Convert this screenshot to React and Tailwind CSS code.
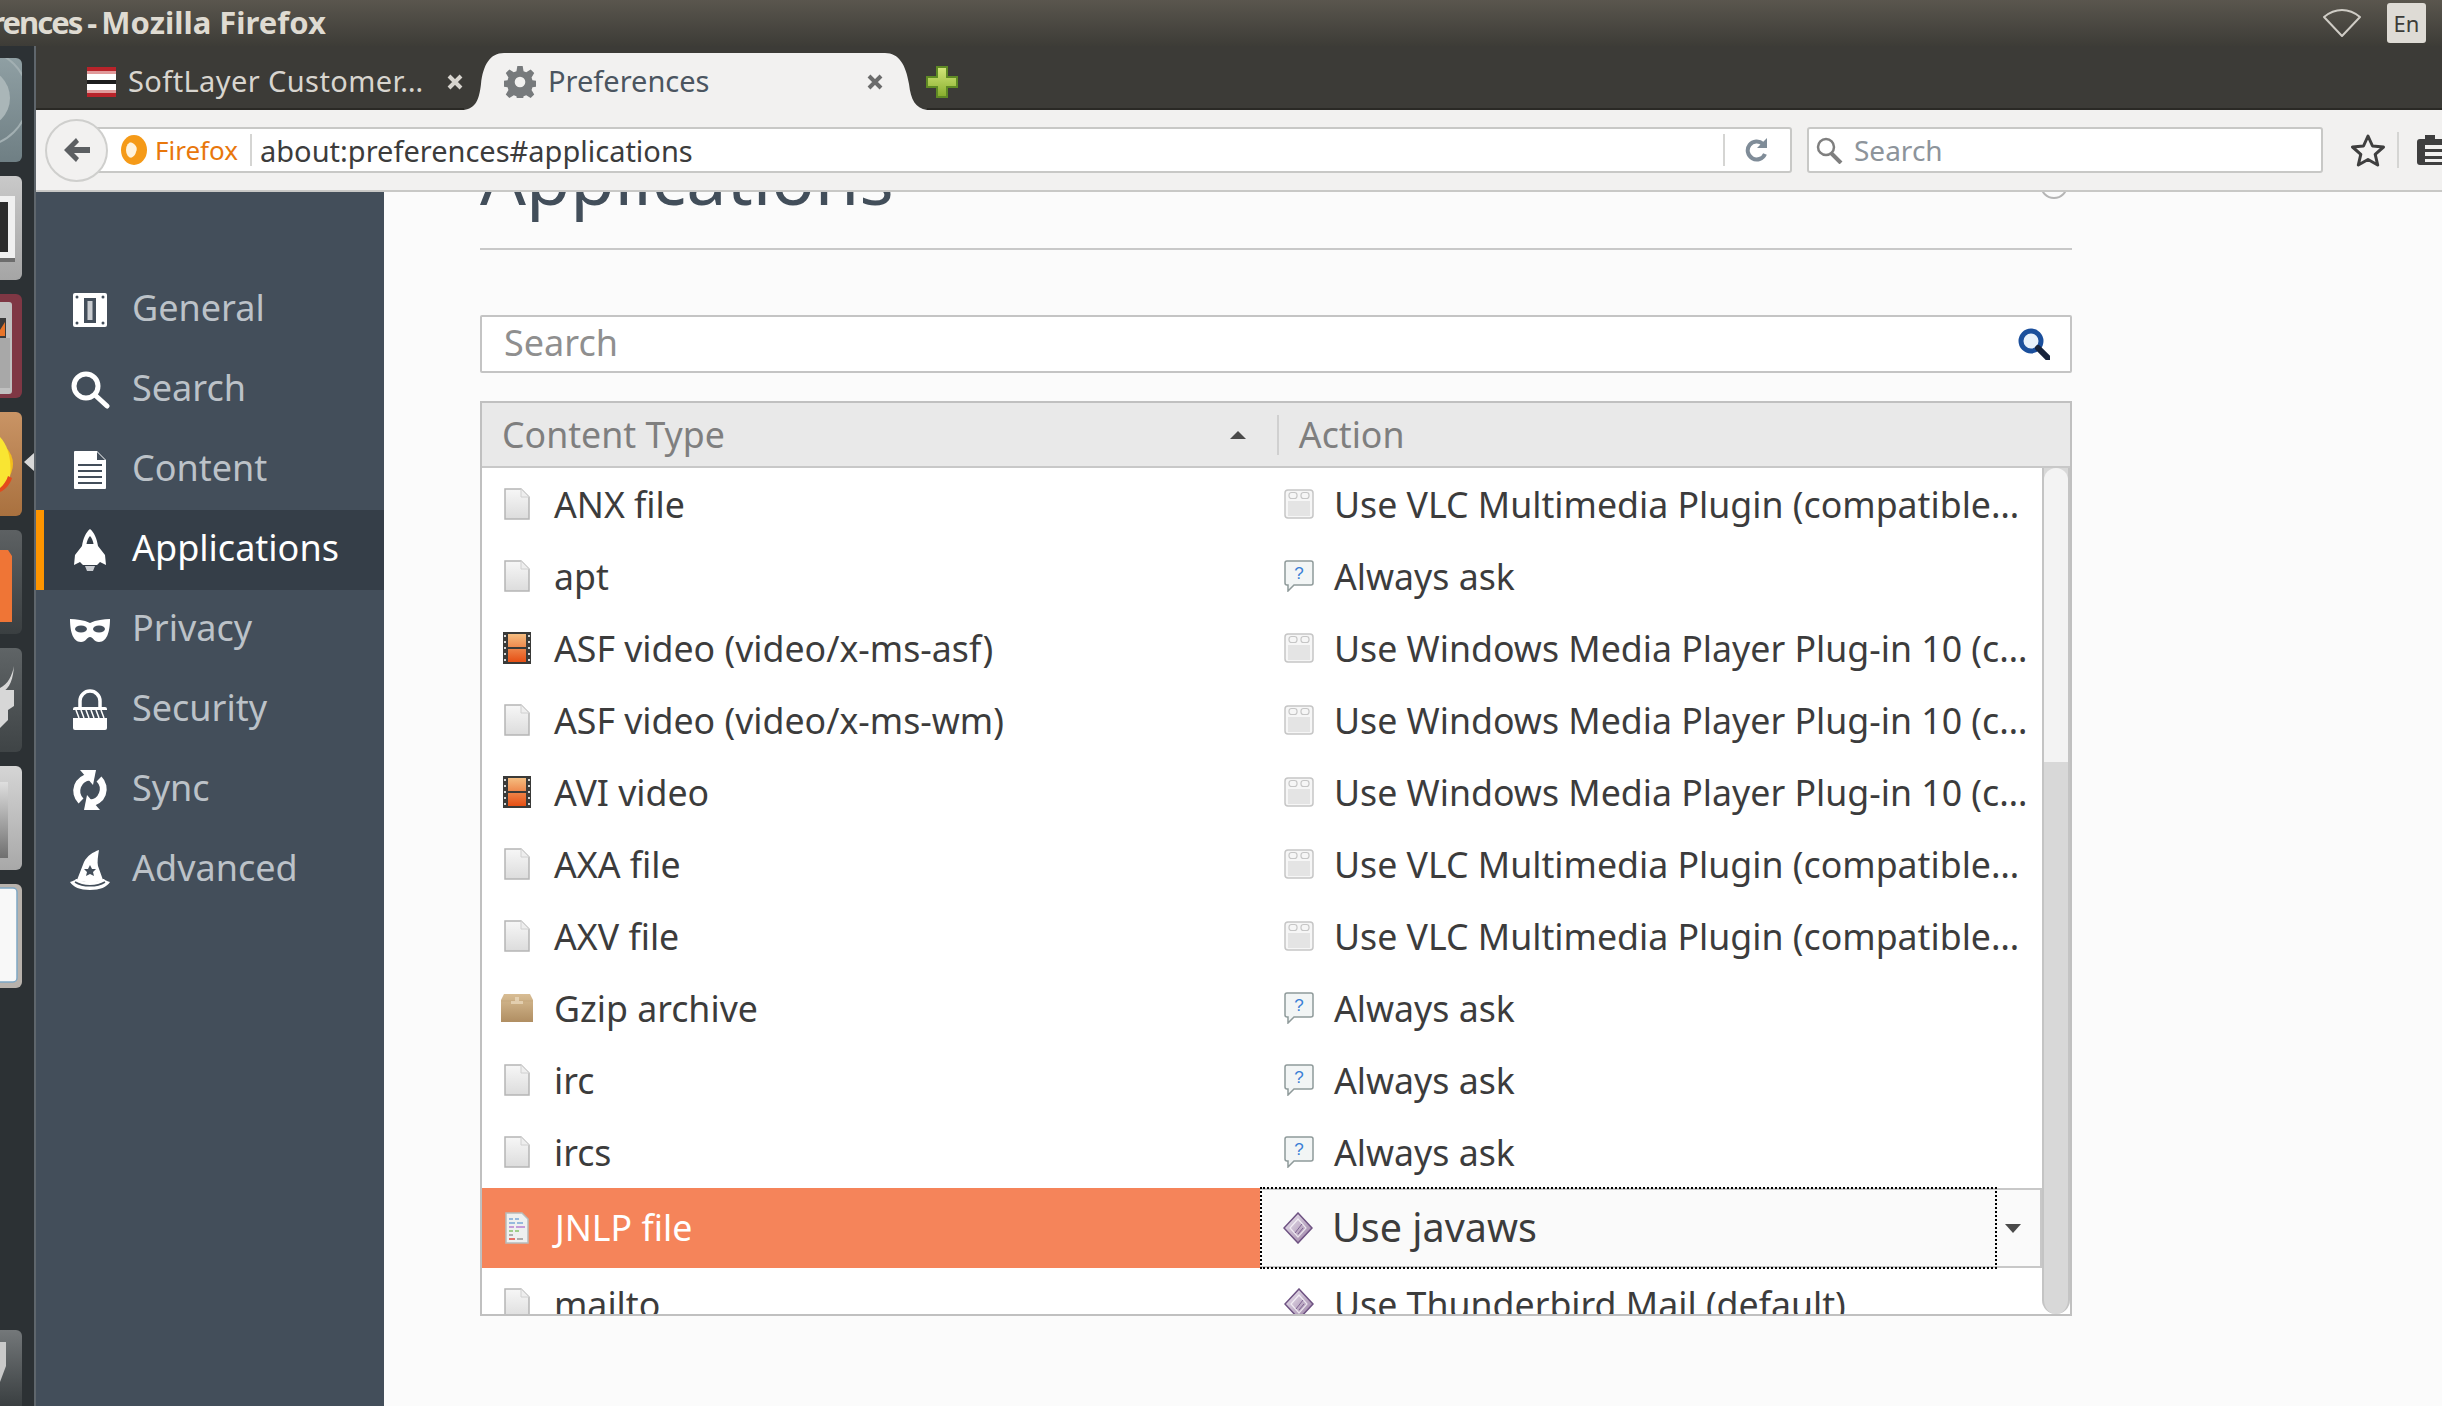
import React from 'react';

const FileIcon = () => (
  <svg width="26" height="32" viewBox="0 0 26 32" className="shrink-0">
    <defs>
      <linearGradient id="fileFill" x1="0" y1="0" x2="0" y2="1">
        <stop offset="0" stopColor="#f7f7f7" />
        <stop offset="1" stopColor="#dcdcdc" />
      </linearGradient>
    </defs>
    <path d="M1 1h16l8 8v22H1z" fill="url(#fileFill)" stroke="#b5b5b5" strokeWidth="1.5" />
    <path d="M17 1v8h8" fill="#eee" stroke="#d0d0d0" strokeWidth="1" />
  </svg>
);

const VideoIcon = () => (
  <svg width="28" height="32" viewBox="0 0 28 32" className="shrink-0">
    <defs>
      <linearGradient id="filmFill" gradientUnits="userSpaceOnUse" x1="0" y1="2" x2="0" y2="30">
        <stop offset="0" stopColor="#f5bd80" />
        <stop offset="1" stopColor="#e64f14" />
      </linearGradient>
    </defs>
    <rect width="28" height="32" fill="#3a3a38" />
    <rect x="5" y="2" width="18" height="13" fill="url(#filmFill)" />
    <rect x="5" y="17" width="18" height="13" fill="url(#filmFill)" />
    {[3, 9, 15, 21, 27].map((y) => (
      <g key={y} fill="#d8d8d8">
        <rect x="1" y={y} width="2" height="2" />
        <rect x="25" y={y} width="2" height="2" />
      </g>
    ))}
  </svg>
);

const BoxIcon = () => (
  <svg width="32" height="28" viewBox="0 0 32 28" className="shrink-0">
    <defs>
      <linearGradient id="boxFill" x1="0" y1="0" x2="0" y2="1">
        <stop offset="0" stopColor="#d8bd94" />
        <stop offset="1" stopColor="#b08e62" />
      </linearGradient>
    </defs>
    <path d="M3 0h26l3 6v22H0V6z" fill="url(#boxFill)" />
    <path d="M0 7h32" stroke="#c5a77c" strokeWidth="1" />
    <path d="M14 3h4v4h4v3H10V7h4z" fill="#ecdcc0" opacity="0.7" />
  </svg>
);

const TextDocIcon = () => (
  <svg width="24" height="32" viewBox="0 0 24 32" className="shrink-0">
    <path d="M1 1h16l6 6v24H1z" fill="#eef0f0" stroke="#b7bcbc" strokeWidth="1.5" />
    <path d="M4 7h4M10 7h4M4 11h6M12 11h6" stroke="#7aa6d6" strokeWidth="1.5" />
    <path d="M4 15h5M11 15h9" stroke="#b77fd1" strokeWidth="1.5" />
    <path d="M4 19h4M10 19h4" stroke="#86c26a" strokeWidth="1.5" />
    <path d="M4 23h4" stroke="#999" strokeWidth="1.5" />
    <path d="M4 27h6" stroke="#e2483d" strokeWidth="1.5" />
    <path d="M12 27h6" stroke="#999" strokeWidth="1.5" />
  </svg>
);

const PluginIcon = () => (
  <svg width="30" height="30" viewBox="0 0 30 30" className="shrink-0">
    <rect x="1" y="1" width="28" height="28" rx="3" fill="#f6f6f6" stroke="#c6c6c6" strokeWidth="1.5" />
    <rect x="4" y="12" width="22" height="15" fill="#e4e4e4" />
    <rect x="5" y="3.500" width="8" height="6" rx="2.500" fill="none" stroke="#c6c6c6" strokeWidth="1.2" />
    <rect x="17" y="3.500" width="8" height="6" rx="2.500" fill="none" stroke="#c6c6c6" strokeWidth="1.2" />
  </svg>
);

const AskIcon = () => (
  <svg width="30" height="32" viewBox="0 0 30 32" className="shrink-0">
    <path d="M3 1h24a2 2 0 0 1 2 2v20a2 2 0 0 1-2 2H10l-6 6v-6H3a2 2 0 0 1-2-2V3a2 2 0 0 1 2-2z" fill="#f2f5f5" stroke="#8f9a9a" strokeWidth="1.5" />
    <text x="15" y="19" textAnchor="middle" fontSize="17" fontFamily="Liberation Sans" fill="#3b7fd6">?</text>
  </svg>
);

const DiamondIcon = () => (
  <svg width="30" height="32" viewBox="0 0 30 32" className="shrink-0">
    <defs>
      <linearGradient id="diamondFill" x1="0" y1="0" x2="1" y2="1">
        <stop offset="0" stopColor="#f3eef6" />
        <stop offset="1" stopColor="#94789f" />
      </linearGradient>
    </defs>
    <path d="M15 1l14 15-14 15L1 16z" fill="url(#diamondFill)" stroke="#6e5282" strokeWidth="1.5" />
    <path d="M15 7l8 9-8 9-8-9z" fill="none" stroke="#ffffff" strokeWidth="1.2" opacity="0.7" />
    <path d="M12 21l7-9M15 22l5-6" stroke="#7d6390" strokeWidth="1" />
  </svg>
);

// sidebar icons, all white on 40x40
const GeneralIcon = () => (
  <svg width="40" height="40" viewBox="0 0 40 40">
    <rect x="3" y="3" width="34" height="34" rx="2" fill="#fff" />
    <rect x="14" y="8" width="12" height="25" fill="#434e5a" />
    <rect x="17.5" y="11" width="5" height="19" fill="#c9ccd0" />
    <g fill="#434e5a">
      <circle cx="7" cy="7" r="1.5" />
      <circle cx="33" cy="7" r="1.5" />
      <circle cx="7" cy="33" r="1.5" />
      <circle cx="33" cy="33" r="1.5" />
    </g>
  </svg>
);

const SearchIcon = () => (
  <svg width="40" height="40" viewBox="0 0 40 40" fill="none" stroke="#fff">
    <circle cx="16" cy="16" r="12" strokeWidth="5" />
    <path d="M25 25l12 11" strokeWidth="5" strokeLinecap="round" />
  </svg>
);

const ContentIcon = () => (
  <svg width="40" height="40" viewBox="0 0 40 40">
    <path d="M5 1h22l9 9v28a1 1 0 0 1-1 1H5a1 1 0 0 1-1-1V2a1 1 0 0 1 1-1z" fill="#fff" />
    <path d="M27 2v8h8" fill="#434e5a" />
    <path d="M8 15h24M8 21h24M8 27h24M8 33h24" stroke="#434e5a" strokeWidth="2" />
  </svg>
);

const RocketIcon = () => (
  <svg width="40" height="44" viewBox="0 0 40 44">
    <path d="M20 1c4 3 7 10 8 17l7 9 1 10-6-3-3 3H13l-3-3-6 3 1-10 7-9c1-7 4-14 8-17z" fill="#fff" />
    <path d="M20 8c2 2 3 5 3.500 8h-7c0.500-3 1.500-6 3.500-8z" fill="#353e48" />
    <path d="M15 38h10l-2 5h-6z" fill="#c8cbd0" />
  </svg>
);

const MaskIcon = () => (
  <svg width="40" height="26" viewBox="0 0 40 26">
    <path d="M0 2c6 0 14 1 20 4 6-3 14-4 20-4 0 10-2 23-11 23-5 0-6-5-9-5s-4 5-9 5C2 25 0 12 0 2z" fill="#fff" />
    <ellipse cx="11" cy="12" rx="6" ry="3.500" fill="#434e5a" />
    <ellipse cx="29" cy="12" rx="6" ry="3.500" fill="#434e5a" />
  </svg>
);

const LockIcon = () => (
  <svg width="40" height="42" viewBox="0 0 40 42">
    <path d="M10 18v-6a10 10 0 0 1 20 0v6" fill="none" stroke="#fff" strokeWidth="3.500" />
    <rect x="3" y="18" width="34" height="23" rx="2" fill="#fff" />
    <rect x="3" y="21" width="34" height="8" fill="#434e5a" />
    <path d="M6 21l3 8M11 21l3 8M16 21l3 8M21 21l3 8M26 21l3 8M31 21l3 8" stroke="#fff" strokeWidth="1.500" />
  </svg>
);

const SyncIcon = () => (
  <svg width="40" height="42" viewBox="0 0 40 42" fill="none">
    <path d="M20 8A14 14 0 0 0 11 32" stroke="#fff" strokeWidth="7" />
    <path d="M20 34A14 14 0 0 0 29 10" stroke="#fff" strokeWidth="7" />
    <path d="M10 1h16l-3 15z" fill="#fff" />
    <path d="M30 41H14l3-15z" fill="#fff" />
  </svg>
);

const HatIcon = () => (
  <svg width="42" height="42" viewBox="0 0 42 42">
    <path d="M30 1c-6 2-12 6-15 12L8 31c4 3 22 3 26 0l-5-14c-1-4 0-10 1-16z" fill="#fff" />
    <path d="M21 16l2 4 4 0-3 3 1 4-4-2-4 2 1-4-3-3 4 0z" fill="#434e5a" />
    <path d="M1 33c5-1 5-3 7-3 4 4 22 4 26 0 2 0 2 2 7 3-3 5-10 8-20 8S4 38 1 33z" fill="#fff" />
    <path d="M6 33c8 5 22 5 30 0" fill="none" stroke="#434e5a" strokeWidth="1.500" />
  </svg>
);

const sidebarItems = [
  { label: 'General', icon: <GeneralIcon /> },
  { label: 'Search', icon: <SearchIcon /> },
  { label: 'Content', icon: <ContentIcon /> },
  { label: 'Applications', icon: <RocketIcon />, active: true },
  { label: 'Privacy', icon: <MaskIcon /> },
  { label: 'Security', icon: <LockIcon /> },
  { label: 'Sync', icon: <SyncIcon /> },
  { label: 'Advanced', icon: <HatIcon /> },
];

const vlc = 'Use VLC Multimedia Plugin (compatible…';
const wmp = 'Use Windows Media Player Plug-in 10 (c…';

const rows = [
  { icon: <FileIcon />, name: 'ANX file', actionIcon: <PluginIcon />, action: vlc },
  { icon: <FileIcon />, name: 'apt', actionIcon: <AskIcon />, action: 'Always ask' },
  { icon: <VideoIcon />, name: 'ASF video (video/x-ms-asf)', actionIcon: <PluginIcon />, action: wmp },
  { icon: <FileIcon />, name: 'ASF video (video/x-ms-wm)', actionIcon: <PluginIcon />, action: wmp },
  { icon: <VideoIcon />, name: 'AVI video', actionIcon: <PluginIcon />, action: wmp },
  { icon: <FileIcon />, name: 'AXA file', actionIcon: <PluginIcon />, action: vlc },
  { icon: <FileIcon />, name: 'AXV file', actionIcon: <PluginIcon />, action: vlc },
  { icon: <BoxIcon />, name: 'Gzip archive', actionIcon: <AskIcon />, action: 'Always ask' },
  { icon: <FileIcon />, name: 'irc', actionIcon: <AskIcon />, action: 'Always ask' },
  { icon: <FileIcon />, name: 'ircs', actionIcon: <AskIcon />, action: 'Always ask' },
];

const Row = ({ icon, name, actionIcon, action }) => (
  <div className="flex h-[72px] shrink-0 items-center text-[#3c3c3c]">
    <div className="flex h-full w-[778px] shrink-0 items-center">
      <div className="ml-[21px] flex w-[28px] shrink-0 justify-center">{icon}</div>
      <span className="ml-[23px] mt-[2px] whitespace-nowrap">{name}</span>
    </div>
    <div className="flex w-[782px] shrink-0 items-center">
      <div className="ml-[24px] flex w-[30px] shrink-0 justify-center">{actionIcon}</div>
      <span className="ml-[20px] mt-[2px] whitespace-nowrap">{action}</span>
    </div>
  </div>
);

const LauncherTiles = () => (
  <>
    <div className="h-[104px] w-[22px] shrink-0 overflow-hidden rounded-r-md bg-gradient-to-b from-[#8f9fa3] to-[#6f7f84]">
      <svg width="22" height="104"><circle cx="-20" cy="40" r="30" fill="#aab6b8" /><circle cx="-20" cy="40" r="48" fill="none" stroke="#a2afb2" strokeWidth="2" /></svg>
    </div>
    <div className="h-[104px] w-[22px] shrink-0 overflow-hidden rounded-r-md bg-gradient-to-b from-[#c9c9c9] to-[#a5a5a5]">
      <svg width="22" height="104"><rect x="-10" y="20" width="25" height="62" fill="#f0f0f0" /><rect x="-10" y="26" width="18" height="50" fill="#2b2b2b" /><rect x="-10" y="82" width="25" height="4" fill="#6d6d6d" /></svg>
    </div>
    <div className="h-[104px] w-[22px] shrink-0 overflow-hidden rounded-r-md bg-[#7f3744]">
      <svg width="22" height="104"><rect x="-6" y="8" width="18" height="92" rx="3" fill="#c0c0c0" /><rect x="-6" y="24" width="12" height="20" fill="#3a3a3a" /><path d="M0 36l5-8v14H0z" fill="#e8752a" /><rect x="-6" y="44" width="16" height="50" fill="#a8a8a8" /></svg>
    </div>
    <div className="h-[104px] w-[22px] shrink-0 overflow-hidden rounded-r-md bg-gradient-to-b from-[#c99465] to-[#a9713f]">
      <svg width="22" height="104"><circle cx="-10" cy="52" r="23" fill="#f3bd1c" /><path d="M0 25c8 8 12 24 10 40-3 8-8 13-12 14z" fill="#f9e532" /><path d="M-4 78c6-2 10-8 12-14l4 2c-2 7-8 14-16 15z" fill="#e34a1c" /></svg>
    </div>
    <div className="h-[104px] w-[22px] shrink-0 overflow-hidden rounded-r-md bg-gradient-to-b from-[#5d6163] to-[#3a3f41]">
      <svg width="22" height="104"><path d="M0 20h8l4 6v66H0z" fill="#ef7536" /></svg>
    </div>
    <div className="h-[104px] w-[22px] shrink-0 overflow-hidden rounded-r-md bg-gradient-to-b from-[#5f6466] to-[#3f4446]">
      <svg width="22" height="104"><path d="M0 40c8-4 12-12 14-22-1 12-3 22-14 28zM0 42h14v16l-6 4v10l-8 8z" fill="#d7d7d7" /></svg>
    </div>
    <div className="h-[104px] w-[22px] shrink-0 overflow-hidden rounded-r-md bg-gradient-to-b from-[#d5d5d5] to-[#a8a8a8]">
      <svg width="22" height="104"><defs><linearGradient id="silverDoc" x1="0" y1="0" x2="0" y2="1"><stop offset="0" stopColor="#dedede" /><stop offset="1" stopColor="#6f6f6f" /></linearGradient></defs><rect x="-6" y="16" width="14" height="76" fill="url(#silverDoc)" /></svg>
    </div>
    <div className="h-[104px] w-[22px] shrink-0 overflow-hidden rounded-r-md bg-[#b8b2ac]">
      <svg width="22" height="104"><rect x="-10" y="4" width="27" height="94" rx="4" fill="#f8f8f8" stroke="#7ea7c4" strokeWidth="1.500" /></svg>
    </div>
  </>
);

const App = () => {
  return (
    <div className="flex h-[1406px] w-[2442px] flex-col overflow-hidden bg-[#fbfbfb] font-['Noto_Sans',sans-serif]">
      {/* title bar */}
      <div className="flex h-[46px] shrink-0 items-center justify-between bg-gradient-to-b from-[#5a564e] to-[#3d3c37] pr-[16px]">
        <div className="mb-[3px] w-[326px] overflow-hidden">
          <div className="flex justify-end whitespace-pre text-[31px] font-bold leading-[40px] text-[#dfdbd2]">
            <span className="tracking-[-2px]">Preferences - </span>
            <span>Mozilla Firefox</span>
          </div>
        </div>
        <div className="flex items-center gap-[25px]">
          <svg width="40" height="30" viewBox="0 0 40 30" fill="none">
            <path d="M2 9C8 4 14 2 20 2s12 2 18 7L20 28z" stroke="#cfccc5" strokeWidth="2" strokeLinejoin="round" />
          </svg>
          <div className="flex h-[40px] w-[39px] items-center justify-center rounded-[3px] bg-[#dedbd5] text-[22px] text-[#3c3b37]">En</div>
        </div>
      </div>

      <div className="flex min-h-0 flex-1">
        {/* launcher */}
        <div className="relative flex w-[36px] shrink-0 flex-col gap-[14px] border-r-2 border-[#5f666c] bg-[#2c3134] pt-[12px]">
          <LauncherTiles />
          <div className="mt-auto h-[76px] w-[22px] shrink-0 overflow-hidden rounded-tr-md bg-gradient-to-b from-[#74787a] to-[#3a3f41]">
            <svg width="22" height="76"><path d="M0 12h6v24l-6 16z" fill="#c9c9c9" /></svg>
          </div>
          <svg className="absolute left-[24px] top-[407px]" width="10" height="18" viewBox="0 0 10 18">
            <path d="M10 0v18L0 9z" fill="#d8d8d8" />
          </svg>
        </div>

        <div className="flex min-w-0 flex-1 flex-col">
          {/* tab strip */}
          <div className="flex h-[64px] shrink-0 bg-[#3c3b37]">
            <div className="flex w-[428px] items-center border-b-2 border-[#2a2925] pl-[51px] pt-[10px]">
              <svg width="29" height="30" viewBox="0 0 29 30" className="shrink-0">
                <rect width="29" height="4" fill="#b8232a" />
                <rect y="4" width="29" height="3" fill="#e09a9a" />
                <rect y="7" width="29" height="6" fill="#fff" />
                <rect y="13" width="29" height="4" fill="#1c1c1c" />
                <rect y="17" width="29" height="6" fill="#fff" />
                <rect y="23" width="29" height="3" fill="#e09a9a" />
                <rect y="26" width="29" height="4" fill="#b8232a" />
              </svg>
              <span className="mb-[2px] ml-[12px] whitespace-nowrap text-[29px] tracking-[0.4px] text-[#d8d5cf]">SoftLayer Customer…</span>
              <svg width="18" height="18" viewBox="0 0 18 18" className="ml-[22px] shrink-0">
                <path d="M3 3l12 12M15 3L3 15" stroke="#d8d5cf" strokeWidth="4" />
              </svg>
            </div>
            <div className="flex shrink-0 items-end">
              <svg width="40" height="57" viewBox="0 0 40 57" className="shrink-0">
                <path d="M0 57c12-2 15-10 17-26C19 12 26 0 40 0v57z" fill="#f2f1f0" />
              </svg>
              <div className="flex h-[57px] w-[381px] items-center bg-[#f2f1f0]">
                <svg width="32" height="32" viewBox="-2 -2 36 36" className="shrink-0">
                  <path d="M13 -2h6l1 6 3 1 5-3 4 4-3 5 1 3 6 1v6l-6 1-1 3 3 5-4 4-5-3-3 1-1 6h-6l-1-6-3-1-5 3-4-4 3-5-1-3-6-1v-6l6-1 1-3-3-5 4-4 5 3 3-1z" fill="#777a7c" />
                  <circle cx="16" cy="16" r="6" fill="#f2f1f0" />
                </svg>
                <span className="mb-[2px] ml-[12px] whitespace-nowrap text-[29px] text-[#4b5560]">Preferences</span>
                <svg width="16" height="16" viewBox="0 0 16 16" className="ml-auto mr-[2px] shrink-0">
                  <path d="M2 2l12 12M14 2L2 14" stroke="#6b6b6b" strokeWidth="4" />
                </svg>
              </div>
              <svg width="42" height="57" viewBox="0 0 42 57" className="shrink-0">
                <path d="M0 0c14 0 21 12 24 31 2 16 6 24 18 26H0z" fill="#f2f1f0" />
              </svg>
            </div>
            <div className="flex flex-1 items-start border-b-2 border-[#2a2925] pt-[20px]">
              <svg width="32" height="32" viewBox="0 0 32 32" className="-ml-[1px]">
                <defs>
                  <linearGradient id="plusFill" x1="0" y1="0" x2="0" y2="1">
                    <stop offset="0" stopColor="#d4e67a" />
                    <stop offset="1" stopColor="#86ad2c" />
                  </linearGradient>
                </defs>
                <path d="M11 1h10v10h10v10H21v10H11V21H1V11h10z" fill="url(#plusFill)" stroke="#5f8a24" strokeWidth="2" />
              </svg>
            </div>
          </div>

          {/* nav bar */}
          <div className="flex h-[82px] shrink-0 items-center border-b-2 border-[#c8c8c6] bg-[#f2f1f0] pl-[9px]">
            <div className="relative z-10 flex h-[63px] w-[63px] shrink-0 items-center justify-center rounded-full border-2 border-[#cfcfcd] bg-[#f2f1f0]">
              <svg width="30" height="30" viewBox="0 0 30 30">
                <path d="M14 3L2 15l12 12 3-4-5-5h16v-6H12l5-5z" fill="#5c5f62" />
              </svg>
            </div>
            <div className="-ml-[32px] flex h-[46px] w-[1716px] shrink-0 items-center rounded-[3px] border-2 border-[#c8c8c6] bg-white pl-[42px]">
              <svg width="28" height="32" viewBox="0 0 28 32" className="shrink-0">
                <ellipse cx="14" cy="16" rx="13" ry="15" fill="#f59a18" />
                <ellipse cx="12" cy="16" rx="6" ry="8" fill="#fff3dd" />
                <path d="M10 8c6 2 8 6 6 10-1 4-4 6-7 6 6 2 12-2 12-9 0-4-5-8-11-7z" fill="#f59a18" />
              </svg>
              <span className="ml-[7px] whitespace-nowrap text-[26px] text-[#e8770c]">Firefox</span>
              <div className="ml-[12px] h-[32px] w-[2px] bg-[#d5d5d3]" />
              <span className="ml-[8px] mt-[1px] whitespace-nowrap text-[29px] text-[#3c3c3c]">about:preferences#applications</span>
              <div className="ml-auto h-[32px] w-[2px] bg-[#d5d5d3]" />
              <svg width="24" height="26" viewBox="0 0 24 26" className="ml-[20px] mr-[21px] shrink-0" fill="none">
                <path d="M18 7a9 9 0 1 0 2 10" stroke="#7f8c98" strokeWidth="4" />
                <path d="M22 1v10H12z" fill="#7f8c98" />
              </svg>
            </div>
            <div className="ml-[15px] flex h-[46px] w-[516px] shrink-0 items-center rounded-[3px] border-2 border-[#c8c8c6] bg-white pl-[6px]">
              <svg width="28" height="28" viewBox="0 0 28 28" fill="none" stroke="#7f7f7f" className="shrink-0">
                <circle cx="11" cy="11" r="8" strokeWidth="2.500" />
                <path d="M16 17l10 10" strokeWidth="4" />
              </svg>
              <span className="ml-[11px] text-[28px] text-[#8d949b]">Search</span>
            </div>
            <svg width="36" height="34" viewBox="0 0 36 34" className="ml-[27px] shrink-0" fill="none">
              <path d="M18 3l4.500 10 11 1-8.300 7.300 2.500 10.700L18 26.500 8.300 32l2.500-10.700L2.500 14l11-1z" stroke="#3f3f3f" strokeWidth="3" strokeLinejoin="round" />
            </svg>
            <div className="ml-[11px] h-[36px] w-[2px] bg-[#d5d5d3]" />
            <svg width="26" height="32" viewBox="0 0 26 32" className="ml-[17px] shrink-0">
              <rect x="1" y="5" width="27" height="26" rx="3" fill="#3f3f3f" />
              <rect x="9" y="1" width="10" height="6" fill="#3f3f3f" />
              <path d="M9 11h20v4H9zM9 18h20v4H9zM9 25h20v3H9z" fill="#f2f1f0" />
            </svg>
          </div>

          <div className="flex min-h-0 flex-1 overflow-hidden">
            {/* sidebar */}
            <nav className="flex w-[348px] shrink-0 flex-col bg-[#434e5a] pt-[78px]">
              {sidebarItems.map((item) => (
                <div
                  key={item.label}
                  className={
                    item.active
                      ? 'flex h-[80px] items-center border-l-8 border-[#ff9500] bg-[#353e48] pl-[25px] text-white'
                      : 'flex h-[80px] items-center pl-[33px] text-[#bcc2c8]'
                  }
                >
                  <div className="flex w-[42px] justify-center">{item.icon}</div>
                  <span className="mb-[5px] ml-[21px] text-[36px]">{item.label}</span>
                </div>
              ))}
            </nav>

            {/* preferences pane */}
            <main className="ml-[96px] flex w-[1592px] shrink-0 flex-col">
              <div className="-mt-[50px] flex h-[108px] shrink-0 justify-between border-b-2 border-[#c8c8c8]">
                <h1 className="text-[72px] leading-[70px] text-[#424e5a]">Applications</h1>
                <div className="mr-[4px] mt-[29px] h-[28px] w-[28px] rounded-full border-2 border-[#b5b5b5]" />
              </div>

              <div className="mt-[65px] flex h-[58px] shrink-0 items-center rounded-[2px] border-2 border-[#c4c4c4] bg-white pl-[22px] pr-[20px]">
                <span className="mb-[2px] text-[36px] text-[#8f8f8f]">Search</span>
                <svg width="32" height="32" viewBox="0 0 32 32" className="ml-auto" fill="none">
                  <circle cx="13" cy="13" r="10" fill="#e8f1fb" stroke="#1b4f9c" strokeWidth="5" />
                  <path d="M20 20l10 10" stroke="#17233a" strokeWidth="6" strokeLinecap="round" />
                </svg>
              </div>

              <div className="mt-[28px] flex h-[915px] shrink-0 flex-col overflow-hidden border-2 border-[#c0c0c0] bg-white text-[35.7px]">
                <div className="flex h-[65px] shrink-0 items-center border-b-2 border-[#c8c8c8] bg-[#e9e9e9] text-[#7f7f7f]">
                  <span className="ml-[20px]">Content Type</span>
                  <svg width="16" height="8" viewBox="0 0 16 8" className="ml-[505px]">
                    <path d="M8 0l8 8H0z" fill="#4a4a4a" />
                  </svg>
                  <div className="ml-[31px] h-[40px] w-[2px] bg-[#d0d0d0]" />
                  <span className="ml-[20px]">Action</span>
                </div>
                <div className="flex min-h-0 flex-1">
                  <div className="flex w-[1560px] shrink-0 flex-col overflow-hidden">
                    {rows.map((row) => (
                      <Row key={row.name} {...row} />
                    ))}
                    <div className="flex h-[80px] shrink-0">
                      <div className="flex w-[778px] items-center bg-[#f5845a] text-white">
                        <div className="ml-[21px] flex w-[28px] justify-center"><TextDocIcon /></div>
                        <span className="ml-[24px]">JNLP file</span>
                      </div>
                      <div className="flex w-[782px] items-center border-y-2 border-r-2 border-[#c8c8c8] bg-[#fafafa] text-[#3c3c3c]">
                        <div className="flex h-[82px] w-[737px] shrink-0 items-center border-2 border-dotted border-black">
                          <div className="ml-[21px] flex w-[30px]"><DiamondIcon /></div>
                          <span className="ml-[19px] text-[39.500px]">Use javaws</span>
                        </div>
                        <svg width="16" height="9" viewBox="0 0 16 9" className="ml-[8px]">
                          <path d="M0 0h16L8 9z" fill="#4a4a4a" />
                        </svg>
                      </div>
                    </div>
                    <Row icon={<FileIcon />} name="mailto" actionIcon={<DiamondIcon />} action="Use Thunderbird Mail (default)" />
                  </div>
                  {/* scrollbar */}
                  <div className="flex w-[28px] shrink-0 flex-col rounded-b-[14px] border-x-2 border-[#c4c4c4] bg-[#d8d8d8]">
                    <div className="h-[294px] rounded-t-[14px] bg-[#f3f3f3]" />
                  </div>
                </div>
              </div>
            </main>
          </div>
        </div>
      </div>
    </div>
  );
};

export default App;
